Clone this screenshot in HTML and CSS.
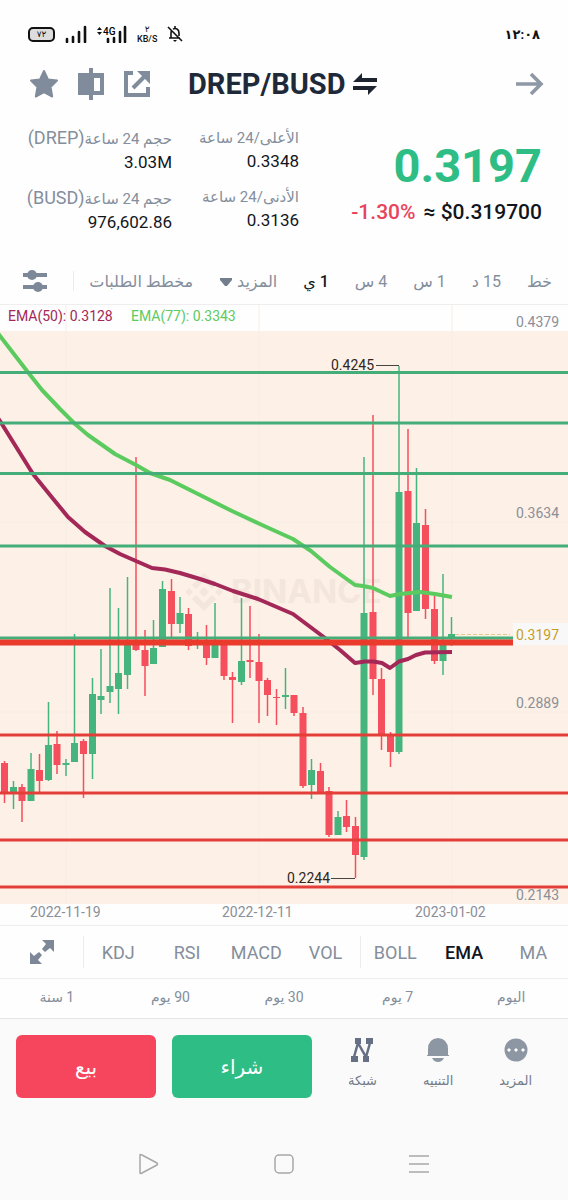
FILE: index.html
```
<!DOCTYPE html>
<html lang="ar" dir="rtl">
<head>
    <meta charset="UTF-8">
    <meta name="viewport" content="width=device-width, initial-scale=1.0">
    <title>DREP/BUSD</title>
    <link rel="stylesheet" href="styles.css">
</head>
<body>

    <div class="status-bar" dir="ltr">
        <span class="battery">٧٢</span>
        <svg class="signal" width="22" height="18" viewBox="0 0 22 18">
            <path d="M2 14v3M8 12v5M14 7v10M20 2v15" stroke="#111" stroke-width="2.600" stroke-linecap="round"/>
        </svg>
        <svg class="signal" width="30" height="18" viewBox="0 0 30 18">
            <path d="M0 5l2.500-3L5 5zM0 7l2.500 3L5 7z" fill="#111"/>
            <text x="6" y="10" class="net">4G</text>
            <path d="M11 14v3M17 13v4M23 7v10M28 2v15" stroke="#111" stroke-width="2.600" stroke-linecap="round"/>
        </svg>
        <span class="speed">٢<br>KB/S</span>
        <svg width="16" height="18" viewBox="0 0 16 18" fill="none" stroke="#111" stroke-width="1.600">
            <path d="M2 13h11M4 13V8q0-2 1-3M6 4q2-1 4 0 2 1 2 4v3M1 2l14 14M8 1v2"/>
            <path d="M6 15h4l-2 2z" fill="#111" stroke="none"/>
        </svg>
        <span class="clock">١٢:٠٨</span>
    </div>

    <header class="header">
        <button class="icon-btn" aria-label="رجوع">
            <svg width="30" height="24" viewBox="0 0 30 24" fill="none" stroke="#8f98a5" stroke-width="3.600">
                <path d="M1 12h25M16 2l10 10-10 10"/>
            </svg>
        </button>
        <h1 class="pair" dir="ltr">DREP/BUSD
            <svg width="26" height="24" viewBox="0 0 26 24" fill="#1e2530">
                <path d="M1 10L10 1v5h15v4zM25 14l-9 9v-5H1v-4z"/>
            </svg>
        </h1>
        <div class="header-icons">
            <button class="icon-btn" aria-label="مشاركة">
                <svg width="28" height="28" viewBox="0 0 28 28" fill="none" stroke="#808b9b" stroke-width="4">
                    <path d="M10 3H3v22h22v-8"/>
                    <path d="M10 18L21 7"/>
                    <path d="M14 1h13v13z" fill="#808b9b" stroke="none"/>
                </svg>
            </button>
            <button class="icon-btn" aria-label="مقارنة">
                <svg width="28" height="32" viewBox="0 0 28 32" fill="#808b9b">
                    <path fill-rule="evenodd" d="M1 5h11V0h4v5h11v22H16v5h-4v-5H1zM17 10v13h6V10z"/>
                </svg>
            </button>
            <button class="icon-btn" aria-label="المفضلة">
                <svg width="30" height="30" viewBox="0 0 30 30" fill="#808b9b" stroke="#808b9b" stroke-width="2" stroke-linejoin="round">
                    <path d="M15 2l4 8.500 9 1-6.500 6.500 1.700 9.500-8.200-4.500-8.200 4.500 1.700-9.500L2 11.500l9-1z"/>
                </svg>
            </button>
        </div>
    </header>

    <section class="summary">
        <div class="price">
            <div class="last">0.3197</div>
            <div class="change"><span class="percent">-1.30%</span><span>≈ $0.319700</span></div>
        </div>
        <dl class="stats">
            <dt>الأعلى/24 ساعة</dt>
            <dd>0.3348</dd>
            <dt>الأدنى/24 ساعة</dt>
            <dd>0.3136</dd>
        </dl>
        <dl class="stats">
            <dt>حجم 24 ساعة<span class="unit">(DREP)</span></dt>
            <dd>3.03M</dd>
            <dt>حجم 24 ساعة<span class="unit">(BUSD)</span></dt>
            <dd>976,602.86</dd>
        </dl>
    </section>

    <nav class="intervals">
        <button>خط</button>
        <button>15 د</button>
        <button>1 س</button>
        <button>4 س</button>
        <button class="active">1 ي</button>
        <button>المزيد <svg width="14" height="10" viewBox="0 0 14 10"><path d="M1 1h12v2L8 9H6L1 3z" fill="#737e8d"/></svg></button>
        <button>مخطط الطلبات</button>
        <span class="divider"></span>
        <button class="settings" aria-label="إعدادات">
            <svg width="24" height="24" viewBox="0 0 24 24" fill="#7d8999">
                <path d="M0 4h24v4H0zM0 16h24v4H0z"/>
                <circle cx="9" cy="6" r="5"/>
                <circle cx="15" cy="18" r="5"/>
            </svg>
        </button>
    </nav>

    <svg class="chart" viewBox="0 305 568 620" direction="ltr">
        <rect class="plot" x="0" y="331" width="568" height="573"/>
        <path class="grid" d="M66 305V904M259 305V904M452 305V904M0 522H568M0 712H568"/>

        <g class="watermark">
            <path d="M204 573l12 12-4 4-8-8-8 8-4-4zM204 611l12-12-4-4-8 8-8-8-4 4zM204 587l5 5-5 5-5-5zM189 588l4 4-4 4-4-4zM219 588l4 4-4 4-4-4z"/>
            <text x="231" y="603">BINANCE</text>
        </g>

        <!-- candle wicks -->
        <path class="wick up" d="M13.500 781V809M40 0M31 753V801M48.500 702V781M66 759V776M74.500 634V762M92.500 678V779M101 649V714M110 588V703M118.500 608V714M127.500 577V689M153.500 620V664M162.500 581V647M180 597V633M197.500 632V649M215 603V658M241.500 598V685M285.500 668V709M311.500 759V799M338 811V835M364 457V860M399 366V754M416.500 468V611M443 574V675M451.500 617V646"/>
        <path class="wick down" d="M4.500 761V803M22 784V822M39.500 754V792M57 731V774M83.500 739V798M136 457V651M145 630V696M171.500 579V637M188.500 608V650M206.500 625V665M224 640V680M232.500 672V723M250 606V678M259 634V723M267.500 678V716M276.500 689V725M294 695V716M303 707V788M320.500 763V793M329 787V837M346.500 800V832M355.500 817V878M373 415V695M381.500 668V750M390.500 732V767M408 429V637M425.500 509V619M434.500 596V664"/>

        <!-- candle bodies -->
        <path class="body up" d="M13.500 787V793M31 769V801M48.500 745V780M66 763V765M74.500 743V762M92.500 694V754M101 696V700M110 686V692M118.500 673V689M127.500 640V675M153.500 648V664M162.500 589V647M180 613V624M197.500 641V643M215 641V658M241.500 661V682M285.500 695V697M311.500 770V785M338 817V835M364 613V857M399 492V752M416.500 523V611M443 641V661M451.500 634V638"/>
        <path class="body down" d="M4.500 763V792M22 787V801M39.500 770V781M57 744V765M83.500 741V754M136 640V650M145 650V666M171.500 591V624M188.500 614V646M206.500 641V658M224 641V676M232.500 677V680M250 660V662M259 662V681M267.500 680V695M276.500 697V698M294 695V713M303 713V786M320.500 771V793M329 791V835M346.500 816V827M355.500 826V855M373 612V679M381.500 679V735M390.500 735V752M408 491V613M425.500 525V609M434.500 609V661"/>

        <!-- moving averages -->
        <polyline class="ema ema-77" points="-2,333 0,336 27,371 42,390 60,409 75,424 88,435 115,454 136,465 150,473 170,480 200,495 232,511 262,525 293,539 311,551 330,567 355,585 363,586 373,588 390,596 400,594 420,592 435,594 452,597"/>
        <polyline class="ema ema-50" points="-2,418 0,421 33,474 50,495 68,517 85,532 105,546 120,554 136,561 152,568 165,569.500 180,573 200,579 215,584 233,591 258,599 293,614 325,638 340,650 355,663 365,661.500 373,661.500 382,663 390,668 399,661.500 408,659 416,655 425,652.500 452,652"/>

        <!-- support and resistance levels -->
        <path class="level resist" d="M0 372.500H568M0 423H568M0 473.500H568M0 546H568M0 638H513"/>
        <path class="level support" d="M0 735H568M0 793H568M0 840H568M0 887H568"/>
        <path class="level support wide" d="M0 642.500H513"/>

        <path class="current" d="M455 634.500H510"/>
        <rect class="tag" x="513" y="623" width="55" height="22"/>
        <text class="now" x="516" y="640">0.3197</text>

        <path class="pointer" d="M376 365.500H399M331 878.500H355"/>
        <text class="extreme" x="331" y="370">0.4245</text>
        <text class="extreme" x="287" y="883">0.2244</text>

        <text class="legend-50" x="8" y="321">EMA(50): 0.3128</text>
        <text class="legend-77" x="131" y="321">EMA(77): 0.3343</text>

        <g class="axis">
            <text x="516" y="327">0.4379</text>
            <text x="516" y="518">0.3634</text>
            <text x="516" y="708">0.2889</text>
            <text x="516" y="900">0.2143</text>
            <text x="30" y="917">2022-11-19</text>
            <text x="222" y="917">2022-12-11</text>
            <text x="415" y="917">2023-01-02</text>
        </g>
    </svg>

    <nav class="indicators">
        <button>MA</button>
        <button class="active">EMA</button>
        <button class="last-in-group">BOLL</button>
        <button>VOL</button>
        <button>MACD</button>
        <button>RSI</button>
        <button class="last-in-group">KDJ</button>
        <button aria-label="ملء الشاشة">
            <svg width="26" height="26" viewBox="0 0 26 26" fill="#7d8797">
                <path d="M13 1h12v12l-4-4-5 4-3-3 4-5zM13 25H1V13l4 4 5-4 3 3-4 5z"/>
            </svg>
        </button>
    </nav>

    <nav class="periods">
        <button>اليوم</button>
        <button>7 يوم</button>
        <button>30 يوم</button>
        <button>90 يوم</button>
        <button>1 سنة</button>
    </nav>

    <footer class="footer">
        <div class="actions">
            <div class="shortcuts">
                <button>
                    <svg width="24" height="24" viewBox="0 0 24 24" fill="#8d96a3">
                        <circle cx="12" cy="12" r="11.500"/>
                        <path d="M5 10l2 2-2 2-2-2zM12 10l2 2-2 2-2-2zM19 10l2 2-2 2-2-2z" fill="#fff"/>
                    </svg>
                    المزيد
                </button>
                <button>
                    <svg width="24" height="24" viewBox="0 0 24 24" fill="#8d96a3">
                        <path d="M1 17h1v-6q0-10 10-11 10 1 10 11v6h1v1H1zM6 20h12q-2 4-6 4t-6-4z"/>
                    </svg>
                    التنبيه
                </button>
                <button>
                    <svg width="24" height="24" viewBox="0 0 24 24" fill="#667085">
                        <path d="M5 0h6v6H5zM16 0h7v6h-7zM1 18h7v6H1zM13 18h6v6h-6z"/>
                        <path d="M4 19L8 5l8 14 4-14" fill="none" stroke="#667085" stroke-width="2.500"/>
                    </svg>
                    شبكة
                </button>
            </div>
            <button class="trade buy">شراء</button>
            <button class="trade sell">بيع</button>
        </div>
        <div class="system-nav">
            <button class="icon-btn" aria-label="التطبيقات">
                <svg width="20" height="20" viewBox="0 0 20 20" stroke="#a8a8a8" stroke-width="1.500"><path d="M0 2h20M0 10h20M0 18h20"/></svg>
            </button>
            <button class="icon-btn" aria-label="الرئيسية">
                <svg width="20" height="20" viewBox="0 0 20 20" fill="none" stroke="#a8a8a8" stroke-width="1.500"><rect x="1" y="1" width="18" height="18" rx="4"/></svg>
            </button>
            <button class="icon-btn" aria-label="السابق">
                <svg width="20" height="22" viewBox="0 0 20 22" fill="none" stroke="#a8a8a8" stroke-width="1.500" stroke-linejoin="round"><path d="M1 2q0-1 2 0l15 8q1 1 0 2L3 20q-2 1-2 0z"/></svg>
            </button>
        </div>
    </footer>

</body>
</html>
```
FILE: styles.css
```
* {
    box-sizing: border-box;
}
body {
    margin: 0;
    background: #fefefe;
    color: #12161c;
    font-family: Roboto, "DejaVu Sans", sans-serif;
}
button {
    padding: 0;
    border: none;
    background: none;
    color: inherit;
    font: inherit;
    white-space: nowrap;
    cursor: pointer;
}
svg {
    display: block;
}

/* status bar */
.status-bar {
    display: flex;
    align-items: center;
    gap: 10px;
    height: 60px;
    padding: 8px 28px 0;
    color: #111;
}
.battery {
    width: 27px;
    height: 15px;
    border: 2px solid #111;
    border-radius: 5px;
    background: #ddd;
    font-size: 9px;
    line-height: 11px;
    text-align: center;
}
.net {
    font-size: 10px;
    font-weight: 500;
}
.speed {
    font-size: 9px;
    font-weight: 500;
    line-height: 10px;
    text-align: center;
}
.clock {
    margin-left: auto;
    font-size: 13px;
    font-weight: bold;
}

/* header */
.header {
    display: flex;
    align-items: center;
    height: 48px;
    padding: 0 23px 0 29px;
}
.pair {
    display: flex;
    align-items: center;
    gap: 6px;
    margin: 0;
    margin-right: auto;
    color: #1e2a3a;
    font-size: 29px;
    font-weight: bold;
}
.header-icons {
    display: flex;
    align-items: center;
    gap: 18px;
    margin-right: 37px;
}

/* summary */
.summary {
    display: grid;
    grid-template-columns: 1fr 100px 146px;
    gap: 27px;
    padding: 18px 26px 0;
    height: 150px;
}
.price {
    padding-top: 12px;
    direction: ltr;
    text-align: right;
    white-space: nowrap;
}
.last {
    color: #2ebd85;
    font-size: 47px;
    font-weight: bold;
    line-height: 56px;
}
.change {
    display: flex;
    justify-content: flex-end;
    gap: 8px;
    margin-top: 4px;
    font-size: 21px;
    font-weight: 500;
    line-height: 28px;
}
.percent {
    color: #e8445a;
}
.stats {
    margin: 0;
    white-space: nowrap;
}
.stats dt {
    color: #848e9c;
    font-size: 15px;
    line-height: 24px;
}
.stats dd {
    margin: 0 0 13px;
    font-size: 17px;
    line-height: 22px;
}
.unit {
    font-size: 18px;
}

/* interval tabs */
.intervals {
    display: flex;
    align-items: center;
    gap: 26px;
    height: 47px;
    padding: 0 16px 0 23px;
    border-bottom: 1px solid #eee;
    color: #848e9c;
    font-size: 16px;
}
.intervals svg {
    display: inline-block;
    vertical-align: middle;
}
.active {
    color: #12161c;
    font-weight: 500;
}
.divider {
    width: 1px;
    height: 20px;
    margin-right: -10px;
    background: #eaecef;
}
.settings {
    margin-right: auto;
}

/* chart */
.chart {
    width: 100%;
    font-size: 14px;
}
.plot {
    fill: #fdf0e6;
}
.grid {
    stroke: #f7ede5;
}
.watermark {
    fill: #f3e6dd;
    font-family: Inter, sans-serif;
    font-size: 33px;
    font-weight: bold;
}
.wick {
    stroke-width: 1.5;
}
.body {
    stroke-width: 7;
}
.up {
    stroke: #45b57d;
}
.down {
    stroke: #f54e5c;
}
.ema {
    fill: none;
    stroke-width: 4;
    stroke-linejoin: round;
}
.ema-77 {
    stroke: #5ccb5f;
}
.ema-50 {
    stroke: #a32857;
}
.level {
    stroke-width: 3;
}
.resist {
    stroke: #45ad78;
}
.support {
    stroke: #e33f38;
}
.wide {
    stroke: #ea3a2c;
    stroke-width: 6;
}
.current {
    stroke: #e6c987;
    stroke-dasharray: 4 2;
}
.tag {
    fill: #f8f8f8;
}
.now {
    fill: #c99e1c;
}
.pointer {
    stroke: #4a4441;
}
.extreme {
    fill: #2d2623;
}
.legend-50 {
    fill: #a32857;
}
.legend-77 {
    fill: #5ccb5f;
}
.axis {
    fill: #8c8f98;
}

/* indicators */
.indicators {
    display: grid;
    grid-template-columns: repeat(7, 5fr) 6fr;
    align-items: center;
    justify-items: stretch;
    height: 54px;
    border-top: 1px solid #eee;
    border-bottom: 1px solid #eee;
    color: #848e9c;
    font-size: 18px;
}
.indicators button {
    height: 32px;
}
.indicators svg {
    margin: 0 auto;
}
.last-in-group {
    border-left: 1px solid #eaecef;
}

/* periods */
.periods {
    display: grid;
    grid-template-columns: repeat(5, 1fr);
    height: 40px;
    border-bottom: 1px solid #e6e6e6;
    color: #848e9c;
    font-size: 14px;
}
.periods button {
    padding-bottom: 4px;
}

/* footer */
.footer {
    background: #fafafa;
}
.actions {
    display: flex;
    gap: 16px;
    padding: 16px;
}
.shortcuts {
    display: flex;
    flex: 1;
    justify-content: space-between;
    padding: 0 20px;
    color: #737c89;
    font-size: 13px;
}
.shortcuts svg {
    margin: 3px auto 11px;
}
.shortcuts button {
    display: flex;
    flex-direction: column;
    align-items: center;
}
.trade {
    width: 140px;
    height: 63px;
    border-radius: 6px;
    color: #fff;
    font-size: 20px;
}
.buy {
    background: #2ebd85;
}
.sell {
    background: #f6465d;
}
.system-nav {
    display: flex;
    justify-content: center;
    gap: 115px;
    padding: 39px 0 25px;
}
```
